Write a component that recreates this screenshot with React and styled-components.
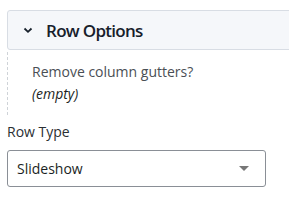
import React from "react";
import styled, { createGlobalStyle } from "styled-components";

const Global = createGlobalStyle`
  html, body { margin: 0; padding: 0; background: #fff; }
  body { font-family: "Open Sans", "Noto Sans", sans-serif; overflow: hidden; }
`;

const Page = styled.div`
  width: 289px;
  height: 201px;
  overflow: hidden;
  padding: 10px 0 0 7px;
  box-sizing: border-box;
`;

const Header = styled.div`
  display: flex;
  align-items: center;
  gap: 13px;
  height: 40px;
  box-sizing: border-box;
  margin-right: -20px;
  padding-left: 15px;
  background: #f5f7fa;
  border: 1px solid #d8dde4;
  border-radius: 3px;
  color: #17202b;
`;

const Title = styled.span`
  font-size: 17px;
  font-weight: 600;
  letter-spacing: -0.7px;
`;

const Section = styled.div`
  border-left: 1px dashed #cfd3d8;
  margin-top: 2px;
  padding: 9px 0 10px 24px;
  font-size: 14px;
  line-height: 22px;
`;

const Question = styled.div`
  color: #4a4f55;
`;

const Value = styled.div`
  color: #1b1f24;
  font-style: italic;
`;

const Field = styled.div`
  margin-top: 7px;
  display: flex;
  flex-direction: column;
  gap: 8px;
  width: 259px;
`;

const Label = styled.label`
  font-size: 14px;
  line-height: 20px;
  color: #2b2f33;
`;

const Select = styled.div`
  display: flex;
  align-items: center;
  justify-content: space-between;
  height: 37px;
  box-sizing: border-box;
  padding: 0 16px 0 9px;
  border: 1px solid #8a8f96;
  border-radius: 3px;
  font-size: 14px;
  color: #1b1f24;
`;

const Caret = styled.span`
  width: 0;
  height: 0;
  border-left: 5px solid transparent;
  border-right: 5px solid transparent;
  border-top: 5px solid #777;
`;

export default function App() {
  return (
    <>
      <Global />
      <Page>
        <Header>
          <svg width="10" height="8" viewBox="0 0 10 8">
            <path d="M1.5 2.5 L5 5.8 L8.5 2.5" fill="none" stroke="#17202b" strokeWidth="1.8" />
          </svg>
          <Title>Row Options</Title>
        </Header>
        <Section>
          <Question>Remove column gutters?</Question>
          <Value>(empty)</Value>
        </Section>
        <Field>
          <Label>Row Type</Label>
          <Select>
            <span>Slideshow</span>
            <Caret />
          </Select>
        </Field>
      </Page>
    </>
  );
}
